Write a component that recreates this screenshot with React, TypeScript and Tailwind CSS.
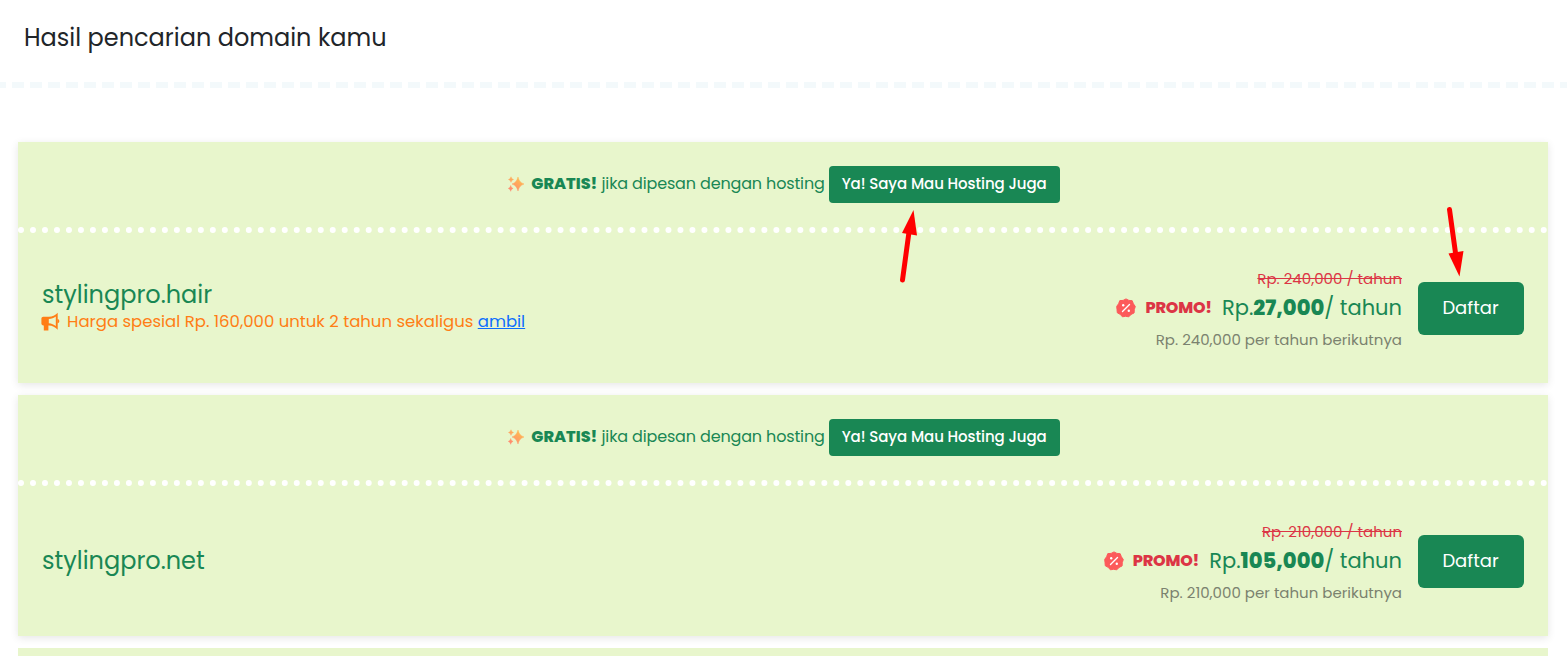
interface DomainOffer {
  name: string;
  special?: string;
  oldPrice: string;
  price: string;
  renewal: string;
}

const offers: DomainOffer[] = [
  {
    name: "stylingpro.hair",
    special: "Harga spesial Rp. 160,000 untuk 2 tahun sekaligus",
    oldPrice: "Rp. 240,000 / tahun",
    price: "27,000",
    renewal: "Rp. 240,000 per tahun berikutnya",
  },
  {
    name: "stylingpro.net",
    oldPrice: "Rp. 210,000 / tahun",
    price: "105,000",
    renewal: "Rp. 210,000 per tahun berikutnya",
  },
];

function SparklesIcon() {
  return (
    <svg width="16" height="16" viewBox="0 0 16 16" fill="none">
      <defs>
        <linearGradient id="spark" x1="13" y1="1" x2="4" y2="15" gradientUnits="userSpaceOnUse">
          <stop stopColor="#ffc04d" />
          <stop offset="1" stopColor="#ff8a70" />
        </linearGradient>
      </defs>
      <path
        fill="url(#spark)"
        stroke="url(#spark)"
        strokeWidth=".5"
        strokeLinejoin="round"
        d="M10 1c1.100 4 2.500 5.700 6 7-3.500 1.300-4.900 3-6 7-1.200-4-2.500-5.700-6-7 3.500-1.300 4.800-3 6-7ZM3 .8c.4 1.700 1 2.300 2.500 2.700C4 4 3.400 4.700 3 6.300 2.600 4.700 2 4 .5 3.500 2 3.100 2.600 2.500 3 .8ZM2.700 9.500c.4 1.700 1 2.300 2.400 2.900-1.400.6-2 1.200-2.400 2.900-.4-1.700-1-2.300-2.400-2.900 1.400-.6 2-1.200 2.400-2.900Z"
      />
    </svg>
  );
}

function MegaphoneIcon() {
  return (
    <svg width="19" height="19" viewBox="0 0 19 19" fill="none">
      <path
        d="M2.300 4.700H8c3.300 0 6.200-1.200 8.700-4v17c-2.500-2.800-5.300-4.200-8.700-4.300h-.6v5H2.800v-5h-.5C1.200 13.400.4 12.600.4 11.500V6.600c0-1.100.8-1.900 1.900-1.900Z"
        fill="#ff7e15"
      />
      <path d="M7.800 6.900c2.800-.2 5-1.100 7-2.500v9.500c-2-1.400-4.200-2.400-7-2.700Z" fill="#e8f6cc" />
      <path d="M16.500 6.900c2.400.3 2.400 4 0 4.400Z" fill="#ff7e15" />
    </svg>
  );
}

function PromoBadge() {
  return (
    <svg width="20" height="20" viewBox="0 0 20 20" fill="none">
      <path
        d="m10 .9 2.900 1.500 3.300.3 1.200 3.100 1.900 2.700-1 3.100-.2 3.300-3 1.500-2.300 2.400-3.300-.5-3.100.5-2.200-2.500-2.900-1.500-.3-3.300L.7 8.400l1.900-2.700 1.200-3.100 3.300-.2Z"
        fill="#fc5a5a"
        stroke="#fc5a5a"
        strokeLinejoin="round"
      />
      <path d="m6.500 13.500 7-7" stroke="#fff" strokeWidth="1.400" strokeLinecap="round" />
      <circle cx="7.200" cy="7.200" r="1.200" fill="#fff" />
      <circle cx="12.800" cy="12.800" r="1.200" fill="#fff" />
    </svg>
  );
}

function HostingBanner() {
  return (
    <div className="flex h-[91px] items-start justify-center border-b-6 border-dotted border-white pt-6 pl-0.5 text-base leading-[35px] text-[#198754]">
      <div className="mr-[7px] flex h-9 w-4 items-center">
        <SparklesIcon />
      </div>
      <span className="tracking-[-0.15px]">
        <b className="font-extrabold tracking-normal">GRATIS!</b> jika dipesan dengan hosting
      </span>
      <button className="ml-1 h-[37px] w-[231px] rounded bg-[#198754] pb-0.5 text-center text-[15px] font-medium tracking-[-0.08px] text-white">
        Ya! Saya Mau Hosting Juga
      </button>
    </div>
  );
}

function DomainCard({ offer }: { offer: DomainOffer }) {
  return (
    <section className="h-[241px] shrink-0 bg-[#e8f6cc] whitespace-nowrap shadow-[0_2px_8px_rgba(0,0,0,0.1)]">
      <HostingBanner />
      <div className="flex h-[150px] items-center justify-between pr-6 pl-6">
        <div className="text-[#198754]">
          <h2 className="text-2xl leading-7">{offer.name}</h2>
          {offer.special && (
            <div className="-ml-px flex h-[26px] items-start text-[16.500px] leading-[26px] text-[#ff7e15]">
              <div className="w-[26px] pt-[3px]">
                <MegaphoneIcon />
              </div>
              <span>
                {offer.special}{" "}
                <a href="#" className="text-[#0d6efd] underline">
                  ambil
                </a>
              </span>
            </div>
          )}
        </div>

        <div className="flex items-center gap-4">
          <div className="flex flex-col items-end pt-1.5">
            <del className="text-[15px] leading-6 text-[#dc3545]">{offer.oldPrice}</del>
            <div className="flex h-[34px] items-center text-[21px] text-[#198754]">
              <PromoBadge />
              <b className="mr-2.5 ml-[9px] text-base font-extrabold tracking-[-0.2px] text-[#dc3545]">PROMO!</b>
              <span>
                Rp.<b className="font-extrabold">{offer.price}</b>/ tahun
              </span>
            </div>
            <span className="text-[15px] leading-[30px] text-[#7b826f]">{offer.renewal}</span>
          </div>
          <button className="h-[53px] w-[106px] rounded-md bg-[#198754] pr-px text-center text-lg text-white">
            Daftar
          </button>
        </div>
      </div>
    </section>
  );
}

export default function App() {
  return (
    <main className="relative h-[656px] overflow-hidden bg-white font-['Poppins','Inter',sans-serif]">
      <header className="h-[82px] pt-5 pl-6">
        <h1 className="text-2xl leading-9 whitespace-nowrap text-[#212529]">Hasil pencarian domain kamu</h1>
      </header>
      <div className="-ml-1.5 w-[1578px] border-t-6 border-dashed border-[#f3f9fb]" />

      <div className="mt-[54px] mr-[19px] ml-[18px] flex flex-col gap-3">
        {offers.map((offer) => (
          <DomainCard key={offer.name} offer={offer} />
        ))}
        <section className="h-[20px] bg-[#e8f6cc]" />
      </div>

      {/* Pointers over the call-to-action buttons */}
      <svg className="absolute top-[205px] left-[890px]" width="40" height="80" viewBox="0 0 40 80">
        <path d="m12.500 75 6.500-48" stroke="#f00" strokeWidth="5" strokeLinecap="round" />
        <path d="M23.500 5 27 30.500 12 28Z" fill="#f00" />
      </svg>
      <svg className="absolute top-[203px] left-[1440px]" width="35" height="80" viewBox="0 0 35 80">
        <path d="m9.500 6.500 6.500 47" stroke="#f00" strokeWidth="5" strokeLinecap="round" />
        <path d="m19.500 73.500-11-23 15-2.500Z" fill="#f00" />
      </svg>
    </main>
  );
}
